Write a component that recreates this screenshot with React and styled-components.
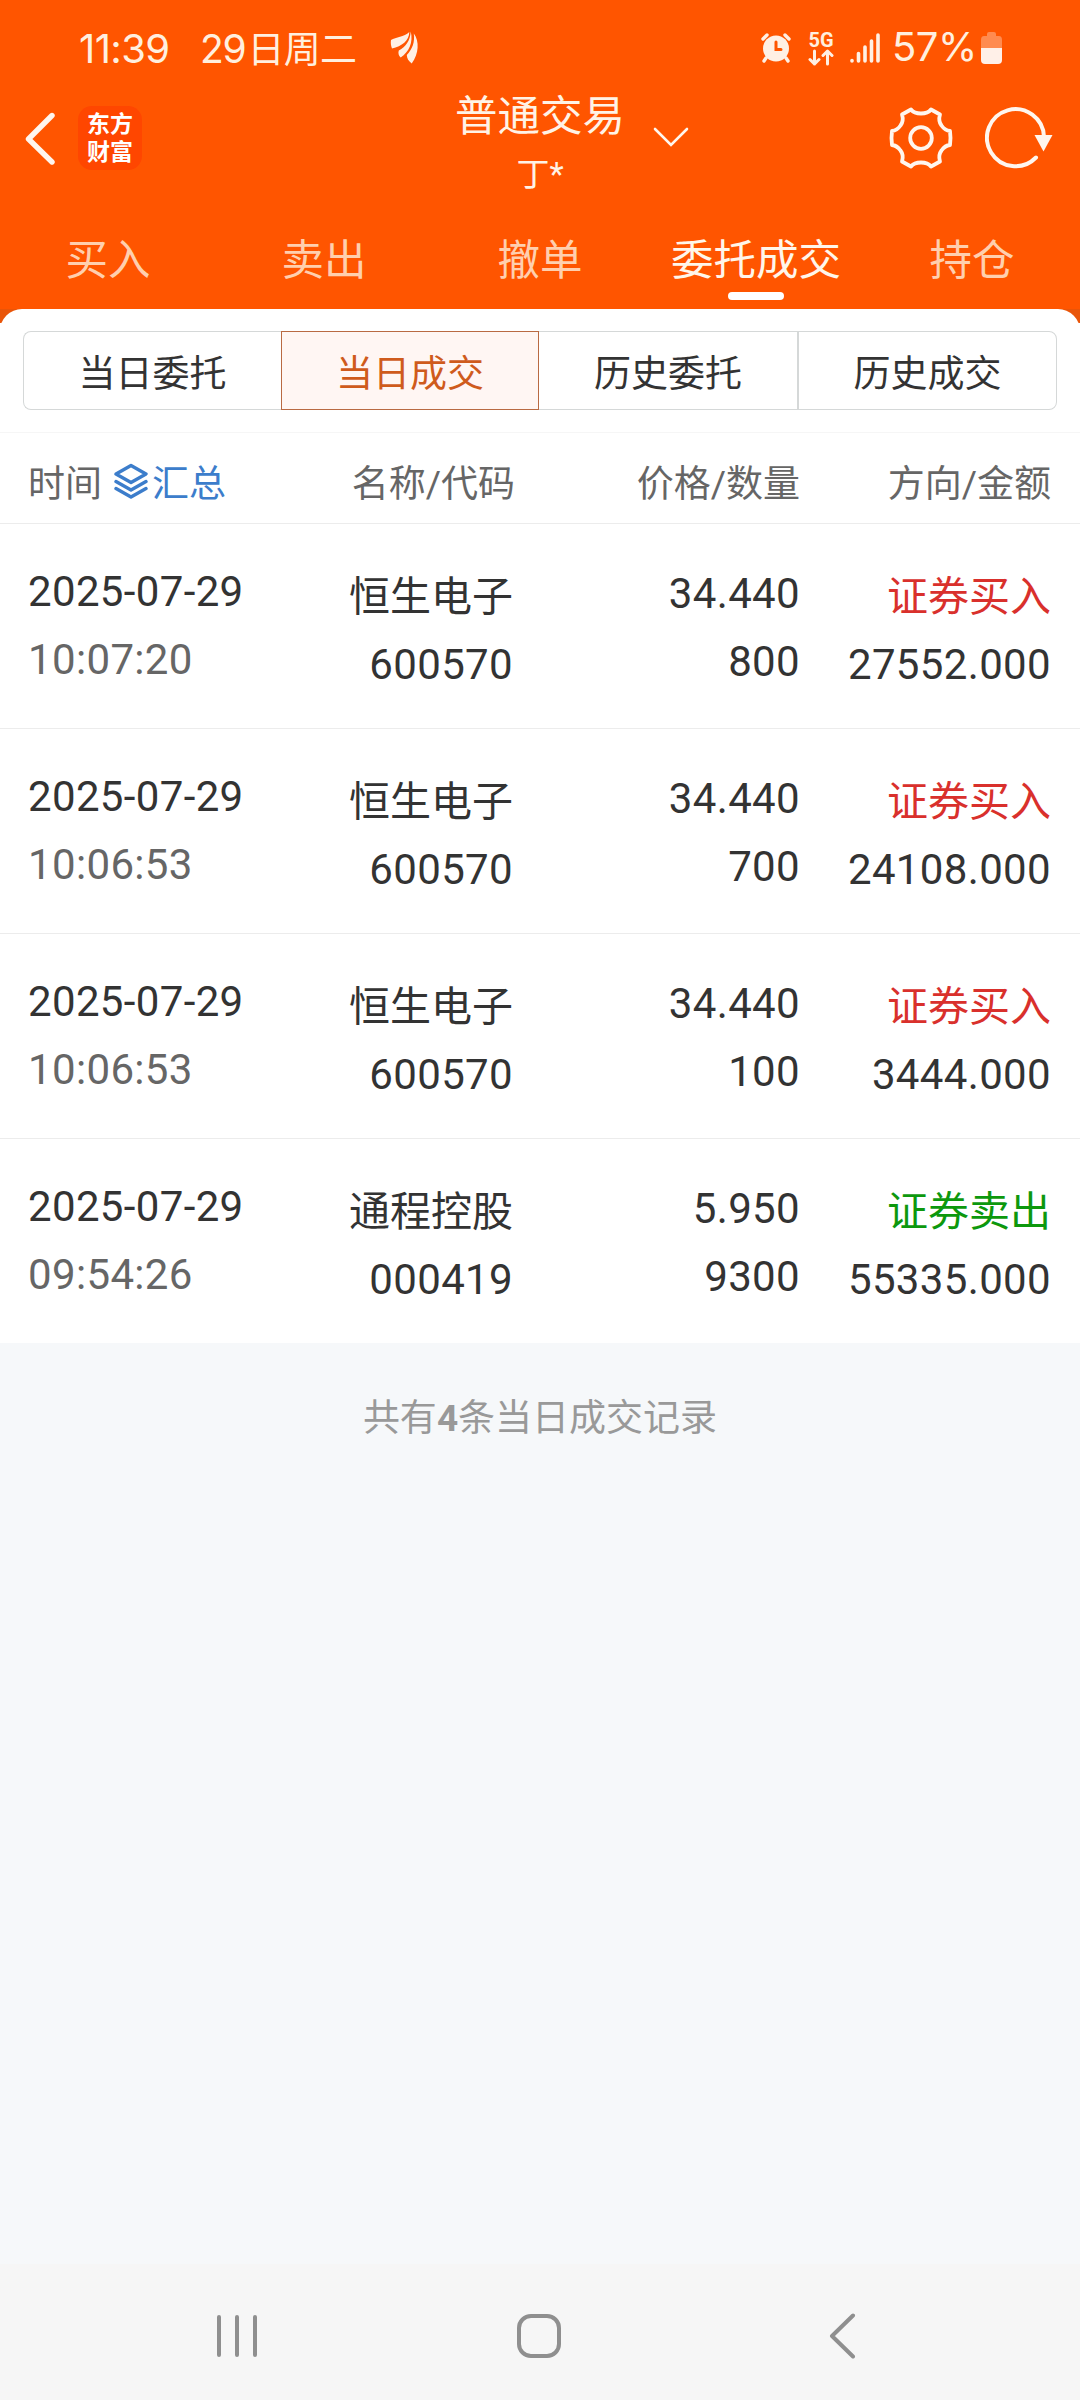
import React from "react";
import styled, { createGlobalStyle } from "styled-components";

const GlobalStyle = createGlobalStyle`
  * {
    box-sizing: border-box;
  }
  body {
    margin: 0;
    background-color: #f6f8fa;
    font-family: Roboto, "Noto Sans CJK SC", sans-serif;
  }
  button {
    padding: 0;
    border: none;
    background: transparent;
    font: inherit;
    color: inherit;
    cursor: pointer;
  }
  svg {
    display: block;
    flex-shrink: 0;
  }
`;

const Screen = styled.div`
  display: flex;
  flex-direction: column;
  width: 1080px;
  height: 2400px;
  overflow: hidden;
  background-color: #f6f8fa;
`;

const Top = styled.header`
  height: 309px;
  background-color: #ff5500;
  color: #fff3e6;
`;

const StatusBar = styled.div`
  display: flex;
  align-items: center;
  height: 96px;
  padding: 0 78px 0 79px;
  color: #ffefdf;
  font-family: Inter, "Noto Sans CJK SC", sans-serif;
  font-size: 40px;
`;

const Clock = styled.span`
  width: 121px;
  letter-spacing: -0.6px;
`;

const StatusDate = styled.span`
  display: flex;
  align-items: baseline;
  width: 190px;
  font-size: 39px;
  letter-spacing: -1.2px;
  line-height: 48px;
  white-space: nowrap;
`;

const Weekday = styled.span`
  margin-left: 2px;
  font-family: "Noto Sans CJK SC", sans-serif;
  font-size: 37px;
  letter-spacing: -0.8px;
  line-height: 48px;
`;

const StatusIcons = styled.div`
  display: flex;
  align-items: center;
  margin-left: auto;
`;

const Network = styled.div`
  display: flex;
  flex-direction: column;
  align-items: center;
  width: 26px;
  margin: 0 16px 0 17px;
  font-family: Roboto, sans-serif;
  font-size: 20px;
  font-weight: 700;
  line-height: 18px;
`;

const Percent = styled.span`
  width: 87px;
  padding: 0 0 3px 12px;
  margin-right: 14px;
  letter-spacing: -0.5px;
  white-space: nowrap;
`;

const TitleBar = styled.div`
  display: grid;
  grid-template-columns: 1fr auto 1fr;
  height: 120px;
`;

const TitleLeft = styled.div`
  display: flex;
  align-items: flex-start;
  padding: 10px 0 0 24px;
`;

const BackButton = styled.button`
  width: 54px;
  padding-top: 6px;
`;

const Logo = styled.div`
  display: flex;
  flex-direction: column;
  align-items: center;
  width: 64px;
  height: 64px;
  padding: 5px 0 0;
  border-radius: 14px;
  background-color: #ff4600;
  color: #fff;
  font-size: 23px;
  font-weight: 700;
  line-height: 28px;
`;

const TitleCenter = styled.div`
  display: flex;
  flex-direction: column;
  align-items: center;
  padding-top: 1px;
`;

const Title = styled.h1`
  margin: 0;
  font-size: 42.5px;
  font-weight: 400;
  line-height: 40px;
`;

const Account = styled.span`
  margin-top: 21px;
  font-size: 33px;
  line-height: 34px;
`;

const TitleRight = styled.div`
  display: flex;
  align-items: flex-start;
  padding: 10px 27px 0 28px;
`;

const DropButton = styled.button`
  padding-top: 21px;
`;

const Actions = styled.div`
  display: flex;
  gap: 32px;
  margin-left: auto;
`;

const Tabs = styled.nav`
  display: grid;
  grid-template-columns: repeat(5, 1fr);
`;

const Tab = styled.button`
  display: flex;
  flex-direction: column;
  align-items: center;
  padding-top: 22px;
  color: ${(props) => (props.$active ? "#fff6ea" : "#ffcfae")};
  font-size: 42.5px;
  line-height: 46px;

  &::after {
    content: "";
    width: 56px;
    height: 8px;
    margin-top: 8px;
    border-radius: 4px;
    background-color: ${(props) => (props.$active ? "#fff" : "transparent")};
  }
`;

const PanelCorners = styled.div`
  background: linear-gradient(#e95509 14px, #fff 14px);
`;

const Panel = styled.main`
  height: 1034px;
  padding-top: 22px;
  border-radius: 22px 22px 0 0;
  background-color: #fff;
`;

const Segments = styled.div`
  display: grid;
  grid-template-columns: 258px 258px 258px 260px;
  height: 79px;
  margin: 0 23px 22px;
`;

const Segment = styled.button`
  padding-top: 8px;
  border: 1px solid #d5d8d8;
  border-right-width: ${(props) => (props.$last ? "1px" : "0")};
  color: #333;
  font-size: 37px;
  line-height: 69px;

  &:first-child {
    border-radius: 8px 0 0 8px;
  }
  &:last-child {
    border-radius: 0 8px 8px 0;
    border-left-width: 2px;
  }
  ${(props) =>
    props.$active &&
    `
    border: 1px solid #b96a42;
    background-color: #fff6f3;
    color: #cf5b1c;
  `}
  ${(props) => props.$afterActive && "border-left: none;"}
`;

const Row = styled.div`
  display: grid;
  grid-template-columns: 300px 185px 287px 251px;
  height: 205px;
  padding-left: 28px;
  border-top: 1px solid #ececec;
`;

const HeadRow = styled(Row)`
  grid-template-columns: 300px 187px 285px 251px;
  height: 91px;
  border-top-color: #f6f6f6;
  color: #666;
  font-size: 37px;
`;

const HeadCell = styled.div`
  display: flex;
  align-items: center;
  justify-content: ${(props) => (props.$left ? "flex-start" : "flex-end")};
  padding-top: 5px;
  white-space: nowrap;
`;

const Summary = styled.button`
  display: flex;
  align-items: center;
  gap: 4px;
  margin-left: 12px;
  color: #3c7dcb;
`;

const Cell = styled.div`
  display: flex;
  flex-direction: column;
  align-items: ${(props) => (props.$left ? "flex-start" : "flex-end")};
  padding-top: ${(props) => props.$top || 43}px;
  color: #333;
  font-size: 42px;
  letter-spacing: 0.35px;
  line-height: 50px;
  white-space: nowrap;
`;

const Name = styled.span`
  padding-top: 5px;
  color: ${(props) => props.$color || "#333"};
  font-size: 41px;
  letter-spacing: 0;
`;

const Second = styled.span`
  margin-top: ${(props) => props.$gap || 18}px;
  color: ${(props) => (props.$muted ? "#666" : "#333")};
`;

const Footer = styled.p`
  flex: 1;
  margin: 0;
  padding-top: 51px;
  color: #999;
  font-size: 37px;
  line-height: 50px;
  text-align: center;
`;

const NavBar = styled.div`
  display: flex;
  align-items: flex-start;
  height: 136px;
  padding: 49px 0 0 216px;
  background-color: #f6f6f6;
`;

const NavButton = styled.button`
  width: ${(props) => props.$width}px;
`;

const tabs = ["买入", "卖出", "撤单", "委托成交", "持仓"];
const segments = ["当日委托", "当日成交", "历史委托", "历史成交"];

const deals = [
  { date: "2025-07-29", time: "10:07:20", name: "恒生电子", code: "600570", price: "34.440", count: "800", side: "buy", amount: "27552.000" },
  { date: "2025-07-29", time: "10:06:53", name: "恒生电子", code: "600570", price: "34.440", count: "700", side: "buy", amount: "24108.000" },
  { date: "2025-07-29", time: "10:06:53", name: "恒生电子", code: "600570", price: "34.440", count: "100", side: "buy", amount: "3444.000" },
  { date: "2025-07-29", time: "09:54:26", name: "通程控股", code: "000419", price: "5.950", count: "9300", side: "sell", amount: "55335.000" },
];

const sides = {
  buy: { label: "证券买入", color: "#d9302c" },
  sell: { label: "证券卖出", color: "#0d980d" },
};

const FeatherIcon = () => (
  <svg width="30" height="34" viewBox="0 0 30 34" fill="#fff0e4">
    <path d="M1 9C6 6 14 6 19.300 1C19 10 12 15 2 17.500C1 15 0.500 12 1 9Z" />
    <path d="M20.700 0.500C23.500 11 19 21 10.700 26.500C8.500 24.500 8 22 8.800 19.500C16 15.500 20 10 20.700 0.500Z" />
    <path d="M23.800 2.500C29.500 10 29 23 21.700 32.500C18.500 30 17 27.500 16.800 24C22.500 18 25 11 23.800 2.500Z" />
  </svg>
);

const AlarmIcon = () => (
  <svg width="30" height="30" viewBox="0 0 30 30" fill="none">
    <circle cx="15" cy="15.5" r="13" fill="#fff0e4" />
    <path d="M2 6L6 2M28 6L24 2M5 25L3 28M25 25L27 28" stroke="#fff0e4" strokeWidth="3.4" strokeLinecap="round" />
    <path d="M15 9V16.5H20" stroke="#ff5500" strokeWidth="3" strokeLinecap="round" />
  </svg>
);

const ArrowsIcon = () => (
  <svg width="26" height="17" viewBox="0 0 26 17" fill="none" stroke="#fff0e4" strokeWidth="3" strokeLinecap="round" strokeLinejoin="round">
    <path d="M6.5 2V15M2 10.5L6.5 15L11 10.5M19.500 15V2M15 6.500L19.500 2L24 6.500" />
  </svg>
);

const SignalIcon = () => (
  <svg width="30" height="30" viewBox="0 0 30 30" stroke="#fff0e4" strokeWidth="3.6" strokeLinecap="round">
    <path d="M2 27.500V28M8.500 20.500V28M15 14V28M21.500 8V28M28 2V28" />
  </svg>
);

const BatteryIcon = () => (
  <svg width="21" height="32" viewBox="0 0 21 32">
    <path d="M6 2Q6 0 8 0H13Q15 0 15 2V4H18Q21 4 21 8V16H0V8Q0 4 3 4H6Z" fill="#ff8b50" />
    <path d="M0 16H21V28Q21 32 17 32H4Q0 32 0 28Z" fill="#fff0e8" />
  </svg>
);

const GearIcon = () => (
  <svg width="64" height="64" viewBox="-32 -32 64 64" fill="none" stroke="#fff6ee" strokeWidth="3.8" strokeLinejoin="round">
    <path d="M-10 -28.500Q-7 -24.500 0 -24.500Q7 -24.500 10 -28.500L19 -23.500Q17 -17 20.500 -12.500Q24 -7.500 29 -7Q30 0 29 7Q24 7.500 20.500 12.500Q17 17 19 23.500L10 28.500Q7 24.500 0 24.500Q-7 24.500 -10 28.500L-19 23.500Q-17 17 -20.500 12.500Q-24 7.500 -29 7Q-30 0 -29 -7Q-24 -7.500 -20.500 -12.500Q-17 -17 -19 -23.500Z" />
    <circle r="10.800" />
  </svg>
);

const RefreshIcon = () => (
  <svg width="68" height="64" viewBox="0 0 68 64">
    <path d="M51 51.500A28.500 28.500 0 1 1 59 31" fill="none" stroke="#fff6ee" strokeWidth="4" strokeLinecap="round" />
    <path d="M49.500 29H67.500L58.500 45.500Z" fill="#fff6ee" />
  </svg>
);

const LayersIcon = () => (
  <svg width="34" height="36" viewBox="0 0 34 36" fill="none" stroke="#3c7dcb" strokeWidth="3.4" strokeLinejoin="round" strokeLinecap="round">
    <path d="M17 2.500L32 11L17 19.500L2 11ZM2 18.500L17 27L32 18.500M2 25.500L17 34L32 25.500" />
  </svg>
);

const App = () => {
  return (
    <Screen>
      <GlobalStyle />
      <Top>
        <StatusBar>
          <Clock>11:39</Clock>
          <StatusDate>
            29<Weekday>日周二</Weekday>
          </StatusDate>
          <FeatherIcon />
          <StatusIcons>
            <AlarmIcon />
            <Network>
              5G
              <ArrowsIcon />
            </Network>
            <SignalIcon />
            <Percent>57%</Percent>
            <BatteryIcon />
          </StatusIcons>
        </StatusBar>
        <TitleBar>
          <TitleLeft>
            <BackButton>
              <svg width="32" height="54" viewBox="0 0 32 54" fill="none" stroke="#fff6ee" strokeWidth="5.4" strokeLinecap="round" strokeLinejoin="round">
                <path d="M28 3.500L4.500 27L28 50" />
              </svg>
            </BackButton>
            <Logo>
              <span>东方</span>
              <span>财富</span>
            </Logo>
          </TitleLeft>
          <TitleCenter>
            <Title>普通交易</Title>
            <Account>丁*</Account>
          </TitleCenter>
          <TitleRight>
            <DropButton>
              <svg width="36" height="21" viewBox="0 0 36 21" fill="none" stroke="#fff6ee" strokeWidth="2.6" strokeLinecap="round">
                <path d="M2 2L18 18L34 2" />
              </svg>
            </DropButton>
            <Actions>
              <button><GearIcon /></button>
              <button><RefreshIcon /></button>
            </Actions>
          </TitleRight>
        </TitleBar>
        <Tabs>
          {tabs.map((tab) => (
            <Tab key={tab} $active={tab === "委托成交"}>{tab}</Tab>
          ))}
        </Tabs>
      </Top>
      <PanelCorners>
        <Panel>
          <Segments>
            {segments.map((label, i) => (
              <Segment key={label} $active={i === 1} $afterActive={i === 2} $last={i === 3}>
                {label}
              </Segment>
            ))}
          </Segments>
          <HeadRow>
            <HeadCell $left>
              时间
              <Summary><LayersIcon />汇总</Summary>
            </HeadCell>
            <HeadCell>名称/代码</HeadCell>
            <HeadCell>价格/数量</HeadCell>
            <HeadCell>方向/金额</HeadCell>
          </HeadRow>
          {deals.map((deal, i) => (
            <Row key={i}>
              <Cell $left>
                <span>{deal.date}</span>
                <Second $muted>{deal.time}</Second>
              </Cell>
              <Cell>
                <Name>{deal.name}</Name>
                <Second $gap={18}>{deal.code}</Second>
              </Cell>
              <Cell $top={45}>
                <span>{deal.price}</span>
                <Second>{deal.count}</Second>
              </Cell>
              <Cell>
                <Name $color={sides[deal.side].color}>{sides[deal.side].label}</Name>
                <Second $gap={18}>{deal.amount}</Second>
              </Cell>
            </Row>
          ))}
        </Panel>
      </PanelCorners>
      <Footer>共有<b>{deals.length}</b>条当日成交记录</Footer>
      <NavBar>
        <NavButton $width={301}>
          <svg width="42" height="46" viewBox="0 0 42 46" stroke="#8f8f8f" strokeWidth="4" strokeLinecap="round">
            <path d="M3 4V42M21 4V42M39 4V42" />
          </svg>
        </NavButton>
        <NavButton $width={312}>
          <svg width="44" height="46" viewBox="0 0 44 46" fill="none" stroke="#8f8f8f" strokeWidth="4">
            <rect x="2" y="3" width="40" height="40" rx="12" />
          </svg>
        </NavButton>
        <NavButton $width={40}>
          <svg width="28" height="46" viewBox="0 0 28 46" fill="none" stroke="#8f8f8f" strokeWidth="4" strokeLinecap="round" strokeLinejoin="round">
            <path d="M24 2.500L3 23L24 43.500" />
          </svg>
        </NavButton>
      </NavBar>
    </Screen>
  );
};

export default App;
